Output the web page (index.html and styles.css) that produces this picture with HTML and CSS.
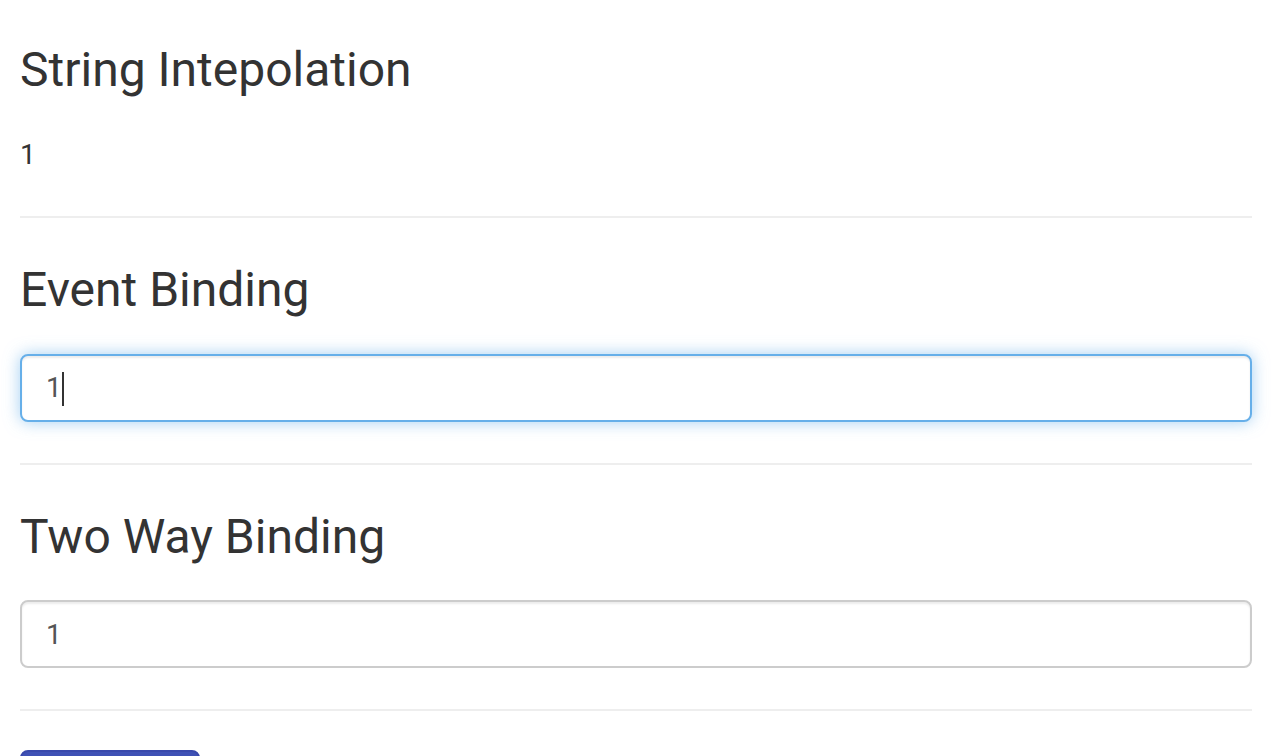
FILE: index.html
```html
<!DOCTYPE html>
<html lang="en">
<head>
<meta charset="utf-8">
<title>Data Binding</title>
<link rel="stylesheet" href="styles.css">
</head>
<body>
<div class="container">
  <section class="block">
    <h3 class="title">String Intepolation</h3>
    <p class="value">1</p>
  </section>
  <hr class="divider">
  <section class="block">
    <h3 class="title">Event Binding</h3>
    <div class="field">
      <input class="control is-focused" type="text" value="1">
      <span class="caret"></span>
    </div>
  </section>
  <hr class="divider">
  <section class="block">
    <h3 class="title">Two Way Binding</h3>
    <div class="field">
      <input class="control" type="text" value="1">
    </div>
  </section>
  <hr class="divider divider-last">
  <button class="btn-primary" type="button">Submit</button>
</div>
</body>
</html>
```

FILE: styles.css
```css
* { box-sizing: border-box; }

html, body {
  margin: 0;
  padding: 0;
  background: #fff;
}

body {
  font-family: Roboto, "Helvetica Neue", Arial, sans-serif;
  font-size: 28px;
  line-height: 40px;
  color: #333;
  overflow: hidden;
}

.container {
  padding: 0 26px 0 20px;
}

.title {
  margin: 46px 0 35px;
  font-size: 48px;
  line-height: 52.8px;
  font-weight: 400;
  color: #333;
}

.block:first-child .title {
  margin-top: 0;
  margin-bottom: 38px;
  padding-top: 44px;
}

.value {
  margin: 0 0 20px;
}

.divider {
  margin: 41px 0 40px;
  border: 0;
  border-top: 2px solid #eee;
  height: 0;
}

.divider-last {
  margin-bottom: 39px;
}

.field {
  position: relative;
  padding-top: 2px;
}

.control {
  display: block;
  width: 100%;
  height: 68px;
  padding: 12px 24px;
  font-family: Roboto, "Helvetica Neue", Arial, sans-serif;
  font-size: 28px;
  line-height: 40px;
  color: #555;
  background: #fff;
  border: 2px solid #ccc;
  border-radius: 8px;
  box-shadow: inset 0 2px 2px rgba(0, 0, 0, 0.075);
  outline: none;
}

.control.is-focused {
  border-color: #66afe9;
  box-shadow: inset 0 2px 2px rgba(0, 0, 0, 0.075), 0 0 16px rgba(102, 175, 233, 0.6);
}

.caret {
  position: absolute;
  left: 42px;
  top: 20px;
  width: 2px;
  height: 34px;
  background: #333;
}

.btn-primary {
  display: inline-block;
  margin-top: 0;
  padding: 12px 44px;
  min-width: 180px;
  font-family: Roboto, "Helvetica Neue", Arial, sans-serif;
  font-size: 28px;
  line-height: 40px;
  color: #fff;
  background: #3f51b5;
  border: 2px solid #3949ab;
  border-radius: 8px;
}
```
